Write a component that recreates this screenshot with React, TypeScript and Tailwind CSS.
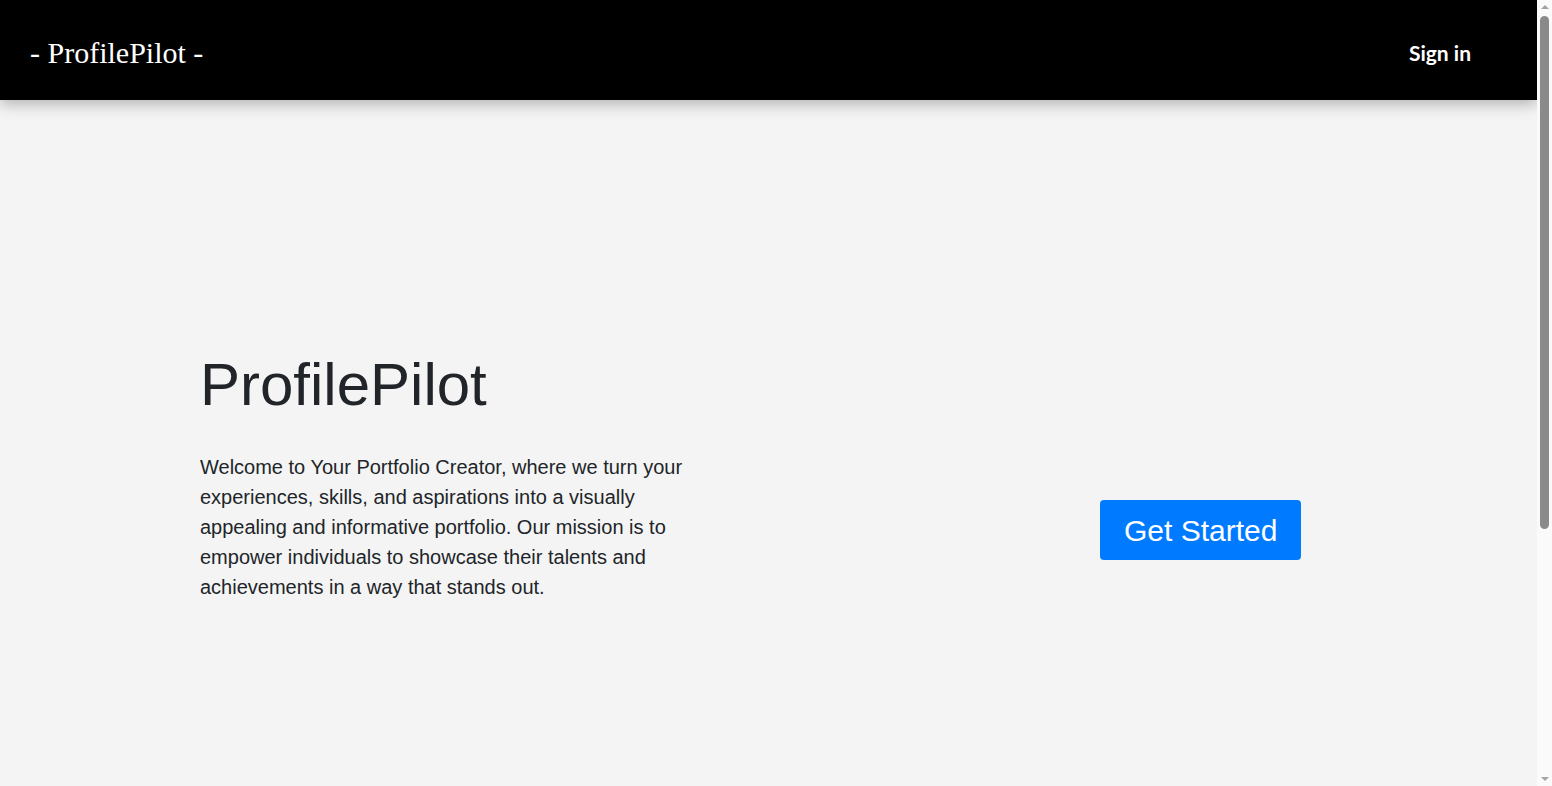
export default function App() {
  return (
    <div className="flex h-screen bg-[#f4f4f4] font-['Liberation_Sans',Arial,sans-serif] text-[#212529]">
      <div className="flex-1 overflow-hidden">
        <header className="relative z-10 flex h-[100px] items-center justify-between bg-black pt-[5px] pl-[30px] pr-[66px] shadow-[0_4px_14px_rgba(0,0,0,0.28)]">
          <a className="font-['Liberation_Serif','Times_New_Roman',serif] text-[30px] text-white">- ProfilePilot -</a>
          <a className="font-['Lato',sans-serif] text-[21px] font-bold text-white">Sign in</a>
        </header>

        <main className="h-[1060px] px-[200px] pt-[249px]">
          <h1 className="text-[60px] leading-[72px]">ProfilePilot</h1>
          <div className="mt-[31px] flex items-start">
            <p className="w-[900px] pr-[400px] text-[20px] leading-[30px]">
              Welcome to Your Portfolio Creator, where we turn your experiences, skills, and aspirations into a visually appealing and informative portfolio. Our mission is to empower individuals to showcase their talents and achievements in a way that stands out.
            </p>
            <button className="mt-[48px] h-[60px] rounded-[4px] bg-[#007bff] px-6 text-[30px] text-white">
              Get Started
            </button>
          </div>
        </main>
      </div>

      {/* scrollbar */}
      <div className="flex w-[15px] flex-col items-center bg-[#fafafa]">
        <div className="mt-[5px] h-0 w-0 border-x-[4px] border-b-[4px] border-x-transparent border-b-[#a3a3a3]" />
        <div className="mt-[7px] h-[513px] w-[9px] rounded-full bg-[#8a8a8a]" />
        <div className="flex-1" />
        <div className="mb-[5px] h-0 w-0 border-x-[4px] border-t-[4px] border-x-transparent border-t-[#a3a3a3]" />
      </div>
    </div>
  );
}
